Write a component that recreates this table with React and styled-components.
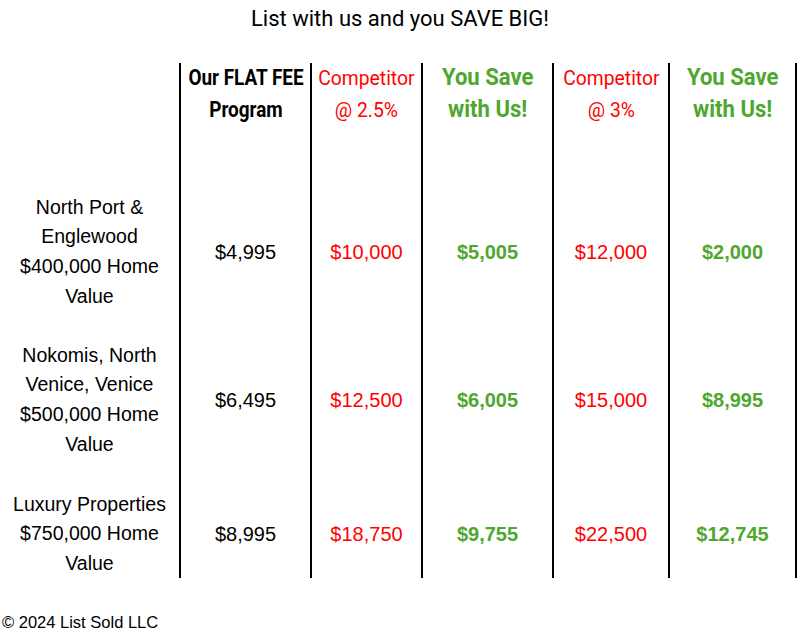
import React from "react";
import styled, { createGlobalStyle } from "styled-components";

const GlobalStyle = createGlobalStyle`
  body {
    margin: 0;
    background: #ffffff;
    font-family: "Liberation Sans", Arial, sans-serif;
    color: #000000;
  }
`;

const RED = "#ff0000";
const GREEN = "#4ea72e";

const Page = styled.div`
  width: 800px;
  height: 633px;
  display: flex;
  flex-direction: column;
`;

const Title = styled.h1`
  margin: 0;
  height: 38px;
  line-height: 38px;
  text-align: center;
  font-family: Roboto, "Liberation Sans", sans-serif;
  font-weight: 400;
  font-size: 22px;
`;

const Table = styled.div`
  margin-top: 25px;
  display: grid;
  grid-template-columns: 179px 131px 111px 131px 116px 129px;
  grid-template-rows: 62px 201px 148px 104px;
`;

const Cell = styled.div`
  display: flex;
  align-items: center;
  justify-content: center;
  text-align: center;
  padding-top: ${(p) => p.$top || 0}px;
  border-left: ${(p) => (p.$label ? "none" : "2px solid #000")};
  border-right: ${(p) => (p.$last ? "2px solid #000" : "none")};
`;

const HeadText = styled.div`
  font-family: Roboto, "Liberation Sans", sans-serif;
  font-weight: ${(p) => (p.$bold ? 700 : 400)};
  font-size: ${(p) => p.$size}px;
  line-height: 32px;
  white-space: nowrap;
  color: ${(p) => p.$color || "#000"};
  transform: scaleX(${(p) => p.$scale});
`;

const Label = styled.div`
  font-family: "Liberation Sans", Arial, sans-serif;
  font-size: 19.5px;
  line-height: 29.6px;
`;

const Value = styled.div`
  font-family: "Liberation Sans", Arial, sans-serif;
  font-size: 20px;
  font-weight: ${(p) => (p.$bold ? 700 : 400)};
  color: ${(p) => p.$color || "#000"};
`;

const Footer = styled.div`
  margin-top: 34px;
  padding-left: 2px;
  font-family: "Liberation Sans", Arial, sans-serif;
  font-size: 16.5px;
  line-height: 20px;
`;

const headers = [
  { lines: ["Our FLAT FEE", "Program"], bold: true, size: 22, scale: 0.86 },
  { lines: ["Competitor", "@ 2.5%"], color: RED, size: 21, scale: 0.92 },
  { lines: ["You Save", "with Us!"], bold: true, size: 23, scale: 0.96, color: GREEN },
  { lines: ["Competitor", "@ 3%"], color: RED, size: 21, scale: 0.92 },
  { lines: ["You Save", "with Us!"], bold: true, size: 23, scale: 0.96, color: GREEN },
];

const rows = [
  {
    label: ["North Port &", "Englewood", "$400,000 Home", "Value"],
    top: 53,
    values: ["$4,995", "$10,000", "$5,005", "$12,000", "$2,000"],
  },
  {
    label: ["Nokomis, North", "Venice, Venice", "$500,000 Home", "Value"],
    top: 0,
    values: ["$6,495", "$12,500", "$6,005", "$15,000", "$8,995"],
  },
  {
    label: ["Luxury Properties", "$750,000 Home", "Value"],
    top: 16,
    values: ["$8,995", "$18,750", "$9,755", "$22,500", "$12,745"],
  },
];

const valueStyle = [
  { color: "#000" },
  { color: RED },
  { color: GREEN, bold: true },
  { color: RED },
  { color: GREEN, bold: true },
];

export default function App() {
  return (
    <Page>
      <GlobalStyle />
      <Title>List with us and you SAVE BIG!</Title>
      <Table>
        <Cell $label />
        {headers.map((h, i) => (
          <Cell key={i} $last={i === headers.length - 1}>
            <HeadText
              $bold={h.bold}
              $size={h.size}
              $scale={h.scale}
              $color={h.color}
            >
              {h.lines.map((l) => (
                <div key={l}>{l}</div>
              ))}
            </HeadText>
          </Cell>
        ))}
        {rows.map((r, ri) => (
          <React.Fragment key={ri}>
            <Cell $label $top={r.top}>
              <Label>
                {r.label.map((l) => (
                  <div key={l}>{l}</div>
                ))}
              </Label>
            </Cell>
            {r.values.map((v, i) => (
              <Cell key={i} $top={r.top} $last={i === r.values.length - 1}>
                <Value $color={valueStyle[i].color} $bold={valueStyle[i].bold}>
                  {v}
                </Value>
              </Cell>
            ))}
          </React.Fragment>
        ))}
      </Table>
      <Footer>© 2024 List Sold LLC</Footer>
    </Page>
  );
}
